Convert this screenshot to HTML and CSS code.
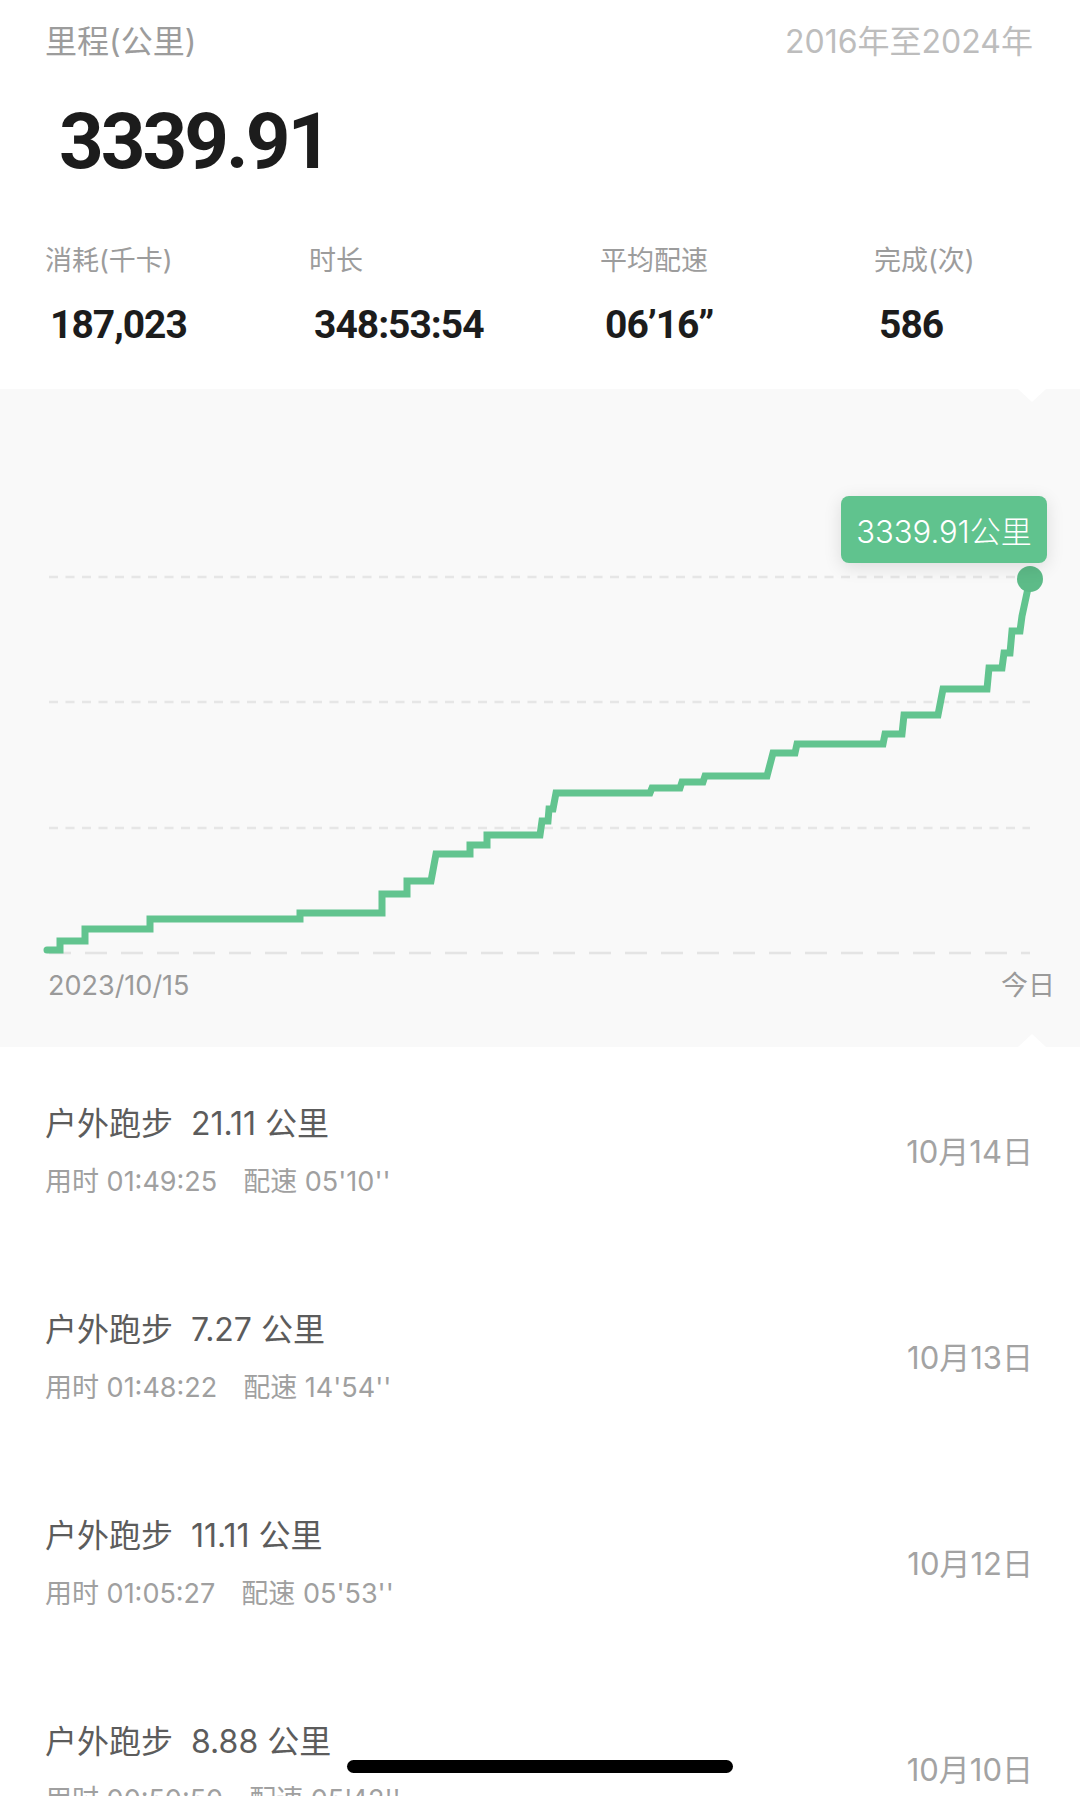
FILE: index.html
```html
<!DOCTYPE html>
<html lang="zh-CN">
<head>
  <meta charset="UTF-8">
  <title>里程</title>
  <link rel="stylesheet" href="styles.css">
</head>
<body>
  <div class="page">
    <!-- 总里程 -->
    <div class="summary">
      <div class="summary-head">
        <span class="label">里程(公里)</span>
        <span class="range">2016年至2024年</span>
      </div>
      <div class="total">3339.91</div>
    </div>

    <!-- 统计 -->
    <div class="stats">
      <div class="stat">
        <div class="stat-label">消耗(千卡)</div>
        <div class="stat-value">187,023</div>
      </div>
      <div class="stat">
        <div class="stat-label">时长</div>
        <div class="stat-value">348:53:54</div>
      </div>
      <div class="stat">
        <div class="stat-label">平均配速</div>
        <div class="stat-value">06’16’’</div>
      </div>
      <div class="stat">
        <div class="stat-label">完成(次)</div>
        <div class="stat-value">586</div>
      </div>
    </div>

    <!-- 累计曲线 -->
    <div class="chart">
      <svg class="chart-svg" width="1080" height="570" viewBox="0 0 1080 570">
        <g class="grid">
          <line x1="49" y1="188" x2="1030" y2="188"/>
          <line x1="49" y1="313" x2="1030" y2="313"/>
          <line x1="49" y1="439" x2="1030" y2="439"/>
        </g>
        <line class="axis" x1="49" y1="564" x2="1030" y2="564"/>
        <polyline class="curve" points="47,561 60,561 60,552 85,552 85,540 150,540 150,530 300,530 300,524 382,524 382,505 407,505 407,492 431,492 436,465 470,465 470,456 487,456 487,446 540,446 542,432 548,432 549,420 553,420 556,404 650,404 652,399 680,399 682,393 703,393 705,387 767,387 773,364 795,364 797,355 883,355 885,345 902,345 904,326 938,326 943,300 987,300 989,279 1002,279 1004,264 1010,264 1012,242 1020,242 1022,227 1030,190"/>
        <circle class="dot" cx="1030" cy="190" r="13"/>
      </svg>
      <div class="tip">3339.91公里</div>
      <div class="chart-axis">
        <span>2023/10/15</span>
        <span>今日</span>
      </div>
    </div>

    <!-- 记录列表 -->
    <div class="records">
      <div class="record">
        <div class="record-main">
          <div class="record-title">户外跑步<span class="dist">21.11 公里</span></div>
          <div class="record-sub">用时 01:49:25<span class="pace">配速 05'10''</span></div>
        </div>
        <div class="record-date">10月14日</div>
      </div>
      <div class="record">
        <div class="record-main">
          <div class="record-title">户外跑步<span class="dist">7.27 公里</span></div>
          <div class="record-sub">用时 01:48:22<span class="pace">配速 14'54''</span></div>
        </div>
        <div class="record-date">10月13日</div>
      </div>
      <div class="record">
        <div class="record-main">
          <div class="record-title">户外跑步<span class="dist">11.11 公里</span></div>
          <div class="record-sub">用时 01:05:27<span class="pace">配速 05'53''</span></div>
        </div>
        <div class="record-date">10月12日</div>
      </div>
      <div class="record">
        <div class="record-main">
          <div class="record-title">户外跑步<span class="dist">8.88 公里</span></div>
          <div class="record-sub">用时 00:50:50<span class="pace">配速 05'42''</span></div>
        </div>
        <div class="record-date">10月10日</div>
      </div>
    </div>
  </div>

  <div class="home-bar"></div>
</body>
</html>
```

FILE: styles.css
```css
html, body {
  margin: 0;
  background: #ffffff;
}

body {
  width: 1080px;
  height: 1796px;
  overflow: hidden;
  position: relative;
  font-family: 'Inter', 'Noto Sans CJK SC', sans-serif;
}

.page {
  display: flex;
  flex-direction: column;
}

/* 头部 */
.summary {
  padding: 21px 47px 0 45px;
}

.summary-head {
  display: flex;
  justify-content: space-between;
  font-size: 32px;
  line-height: 42px;
}

.summary-head .label {
  color: #9c9c9c;
}

.summary-head .range {
  color: #bdbdbd;
}

.total {
  margin-top: 40px;
  padding-left: 14px;
  font-family: 'Roboto', sans-serif;
  font-size: 78px;
  line-height: 78px;
  font-weight: 700;
  letter-spacing: -3px;
  color: #1c1c1c;
}

/* 统计 */
.stats {
  display: grid;
  grid-template-columns: 264px 291px 274px 1fr;
  padding: 62px 0 42px 45px;
}

.stat-label {
  font-size: 27px;
  line-height: 36px;
  color: #9c9c9c;
}

.stat-value {
  margin-top: 24px;
  padding-left: 5px;
  font-family: 'Roboto', sans-serif;
  font-size: 39px;
  line-height: 44px;
  font-weight: 700;
  letter-spacing: -1px;
  color: #1c1c1c;
}

/* 图表 */
.chart {
  position: relative;
  background: #f9f9f9;
  height: 658px;
}

.chart::before,
.chart::after {
  content: '';
  position: absolute;
  left: 1018px;
  width: 0;
  height: 0;
  border-left: 14px solid transparent;
  border-right: 14px solid transparent;
}

.chart::before {
  top: 0;
  border-top: 13px solid #ffffff;
}

.chart::after {
  bottom: 0;
  border-bottom: 13px solid #ffffff;
}

.chart-svg {
  display: block;
}

.grid line {
  stroke: #e6e6e6;
  stroke-width: 2.5;
  stroke-dasharray: 9 7.5;
}

.axis {
  stroke: #e4e4e4;
  stroke-width: 2.5;
  stroke-dasharray: 22 14;
}

.curve {
  fill: none;
  stroke: #62c48f;
  stroke-width: 7;
  stroke-linejoin: miter;
  stroke-linecap: round;
}

.dot {
  fill: #5dbb88;
}

.tip {
  position: absolute;
  left: 841px;
  top: 107px;
  width: 206px;
  height: 67px;
  box-sizing: border-box;
  display: flex;
  align-items: center;
  justify-content: center;
  background: #60c38e;
  border-radius: 8px;
  box-shadow: 0 4px 18px rgba(0, 0, 0, 0.12);
  color: #ffffff;
  font-size: 31px;
  font-weight: 300;
}

.chart-axis {
  display: flex;
  justify-content: space-between;
  margin-top: 12px;
  padding: 0 25px 0 48px;
  font-size: 27px;
  line-height: 30px;
  color: #9a9a9a;
}

/* 列表 */
.records {
  display: flex;
  flex-direction: column;
}

.record {
  display: flex;
  align-items: center;
  justify-content: space-between;
  padding: 56px 47px 53px 45px;
}

.record-title {
  font-size: 32px;
  line-height: 42px;
  color: #5c5c5c;
}

.record-title .dist {
  margin-left: 18px;
}

.record-sub {
  margin-top: 19px;
  font-size: 27px;
  line-height: 36px;
  color: #a0a0a0;
}

.record-sub .pace {
  margin-left: 26px;
}

.record-date {
  font-size: 31px;
  line-height: 40px;
  color: #a3a3a3;
}

.home-bar {
  position: absolute;
  left: 347px;
  bottom: 23px;
  width: 386px;
  height: 13px;
  border-radius: 7px;
  background: #000000;
}
```
